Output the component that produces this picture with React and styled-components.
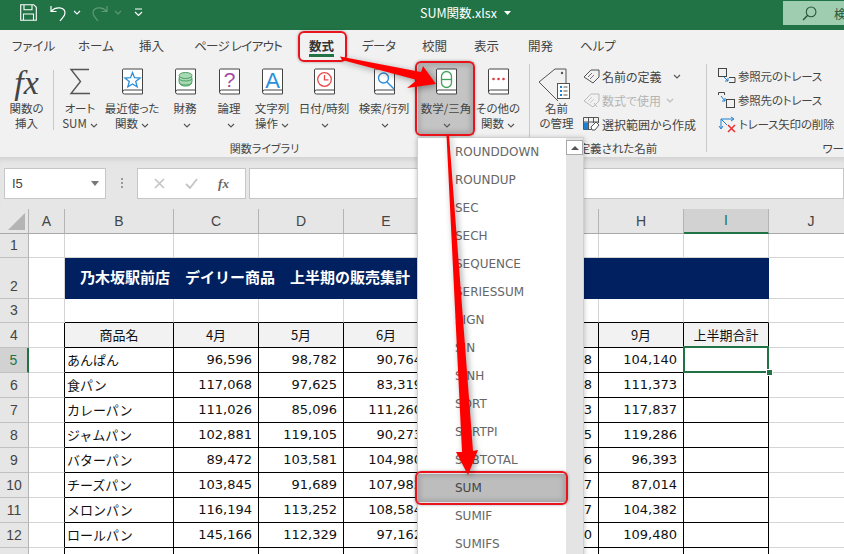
import React from "react";
import styled, { createGlobalStyle } from "styled-components";

const GREEN = "#217346";
const RED = "#e8131b";
const JP = `"Noto Sans CJK JP", "Noto Sans", sans-serif`;
const NUM = `"DejaVu Sans", sans-serif`;
const HEAD = `"Liberation Sans", sans-serif`;

const Global = createGlobalStyle`
  html, body { margin: 0; padding: 0; background: #fff; }
  * { box-sizing: border-box; }
`;

const Window = styled.div`
  position: relative;
  width: 844px;
  height: 554px;
  overflow: hidden;
  font-family: ${JP};
  color: #444;
`;

/* title bar */
const TitleBar = styled.div`
  display: flex;
  align-items: flex-start;
  height: 30px;
  background: ${GREEN};
`;
const QuickAccess = styled.div`
  display: flex;
  align-items: center;
  width: 420px;
  height: 25px;
  padding-left: 20px;
`;
const Title = styled.div`
  flex: 1;
  display: flex;
  align-items: center;
  gap: 7px;
  height: 25px;
  color: #fff;
  font-size: 12.5px;
`;
const SearchBox = styled.div`
  flex: none;
  display: flex;
  align-items: center;
  width: 61px;
  height: 24px;
  margin-top: 1px;
  padding-left: 19px;
  gap: 17px;
  background: #9fcdb0;
  color: #24553a;
  font-size: 12px;
  white-space: nowrap;
  overflow: hidden;
  svg {
    flex: none;
  }
`;

/* tabs */
const TabBar = styled.div`
  display: flex;
  align-items: center;
  height: 32px;
  padding: 0 0 2px 12px;
  background: #f1f1f1;
  font-feature-settings: "palt";
`;
const Tab = styled.div`
  flex: none;
  width: ${(p) => p.$w}px;
  font-size: 12.5px;
  letter-spacing: ${(p) => p.$tight || 0}px;
  color: ${(p) => (p.$active ? "#333" : "#444")};
  font-weight: ${(p) => (p.$active ? 700 : 400)};
  white-space: nowrap;
`;
const TabText = styled.span`
  position: relative;
  display: inline-block;
  ${(p) =>
    p.$active &&
    `&::after {
      content: "";
      position: absolute;
      left: 0;
      right: 0;
      bottom: -2px;
      height: 3px;
      background: ${GREEN};
    }`}
`;

/* ribbon */
const Ribbon = styled.div`
  display: flex;
  height: 95px;
  background: #f1f1f1;
  overflow: hidden;
  font-feature-settings: "palt";
`;
const Group = styled.div`
  display: flex;
  flex-direction: column;
  flex: none;
  width: ${(p) => p.$w}px;
  height: 88px;
  margin-top: 2px;
  border-right: ${(p) => (p.$open ? "none" : "1px solid #c8c8c8")};
`;
const GroupBody = styled.div`
  display: flex;
  flex: 1;
  align-items: flex-start;
`;
const GroupLabel = styled.div`
  height: 10px;
  text-align: ${(p) => p.$align || "center"};
  font-size: ${(p) => p.$size || 11.5}px;
  line-height: 12px;
  white-space: nowrap;
  color: #444;
`;
const BigButton = styled.div`
  display: flex;
  flex-direction: column;
  align-items: center;
  flex: none;
  width: ${(p) => p.$w}px;
  ${(p) =>
    p.$on
      ? `height: 73px; margin-top: -2px; padding-top: 6px; background: #c4c4c4;`
      : `padding-top: 4px;`}
`;
const IconSlot = styled.div`
  display: flex;
  justify-content: center;
  height: 33px;
`;
const FxMark = styled.span`
  font-family: "Liberation Serif", serif;
  font-style: italic;
  font-size: 34px;
  line-height: 30px;
  color: #444;
`;
const Label = styled.div`
  font-size: 11.5px;
  line-height: 15px;
  text-align: center;
  white-space: nowrap;
`;
const InnerSep = styled.div`
  flex: none;
  width: 1px;
  height: 60px;
  margin-top: 6px;
  background: #c8c8c8;
`;
const SmallList = styled.div`
  display: flex;
  flex-direction: column;
  padding-left: ${(p) => p.$indent || 0}px;
`;
const SmallRow = styled.div`
  display: flex;
  align-items: center;
  gap: 2px;
  height: 24px;
  font-size: ${(p) => p.$size || 12}px;
  letter-spacing: ${(p) => p.$tight || 0}px;
  white-space: nowrap;
  color: ${(p) => (p.$off ? "#b4b4b4" : "#444")};
`;

/* formula bar */
const FormulaBar = styled.div`
  display: flex;
  align-items: flex-start;
  height: 52px;
  padding: 11px 0 0 4px;
  background: #e6e6e6;
  box-shadow: inset 0 6px 5px -3px #d2d2d2;
`;
const NameBox = styled.div`
  display: flex;
  align-items: center;
  justify-content: space-between;
  width: 102px;
  height: 31px;
  padding: 0 6px 0 7px;
  background: #fff;
  border: 1px solid #c6c6c6;
  font-family: ${HEAD};
  font-size: 13px;
  color: #444;
`;
const Grip = styled.div`
  width: 2px;
  height: 11px;
  margin: 10px 14px 0 15px;
  background: repeating-linear-gradient(#9a9a9a 0 2px, transparent 2px 4px);
`;
const FxBox = styled.div`
  display: flex;
  align-items: center;
  justify-content: space-around;
  width: 109px;
  height: 31px;
  padding: 0 6px;
  background: #fff;
  border: 1px solid #c6c6c6;
`;
const FxSmall = styled.span`
  font-family: "Liberation Serif", serif;
  font-style: italic;
  font-weight: 700;
  font-size: 13px;
  color: #666;
`;
const FormulaInput = styled.div`
  flex: 1;
  height: 31px;
  margin-left: 3px;
  background: #fff;
  border: 1px solid #c6c6c6;
`;

/* sheet */
const Sheet = styled.div`
  display: grid;
  grid-template-columns: 29px 36px 109px repeat(8, 85px);
  grid-template-rows: 25px 24px 41px 24px 25px repeat(9, 25px);
  height: 345px;
  background: #fff;
`;
const Corner = styled.div`
  background: #e6e6e6;
  border-right: 1px solid #b4b4b4;
  border-bottom: 1px solid #a8a8a8;
  display: flex;
  align-items: flex-end;
  justify-content: flex-end;
  padding: 0 3px 3px 0;
  &::before {
    content: "";
    width: 17px;
    height: 17px;
    background: #b4b4b4;
    clip-path: polygon(100% 0, 100% 100%, 0 100%);
  }
`;
const ColHead = styled.div`
  display: flex;
  align-items: center;
  justify-content: center;
  padding-bottom: 1px;
  background: ${(p) => (p.$on ? "#d2d2d2" : "#e6e6e6")};
  border-right: 1px solid #b4b4b4;
  border-bottom: ${(p) => (p.$on ? `2px solid ${GREEN}` : "1px solid #a8a8a8")};
  font-family: ${HEAD};
  font-size: 14px;
  color: ${(p) => (p.$on ? GREEN : "#444")};
`;
const RowHead = styled.div`
  display: flex;
  align-items: flex-end;
  justify-content: center;
  padding-bottom: 4px;
  background: ${(p) => (p.$on ? "#d2d2d2" : "#e6e6e6")};
  border-right: ${(p) => (p.$on ? `2px solid ${GREEN}` : "1px solid #b4b4b4")};
  border-bottom: 1px solid #c0c0c0;
  font-family: ${HEAD};
  font-size: 14px;
  line-height: 16px;
  color: ${(p) => (p.$on ? GREEN : "#444")};
`;
const Cell = styled.div`
  position: relative;
  z-index: ${(p) => (p.$active ? 1 : 0)};
  display: flex;
  align-items: center;
  justify-content: ${(p) => p.$align || "flex-start"};
  min-width: 0;
  padding: 0 ${(p) => (p.$align === "flex-end" ? 6 : 2)}px 1px 2px;
  background: ${(p) => p.$bg || "#fff"};
  border-right: 1px solid ${(p) => p.$right || "#d4d4d4"};
  border-bottom: 1px solid ${(p) => p.$bottom || "#d4d4d4"};
  font-family: ${(p) => (p.$num ? NUM : JP)};
  font-size: 13px;
  color: #111;
  white-space: nowrap;
  overflow: ${(p) => (p.$active ? "visible" : "hidden")};
  ${(p) =>
    p.$active &&
    `&::before {
      content: "";
      position: absolute;
      inset: -2px -1px -1px -1px;
      border: 2px solid ${GREEN};
    }
    &::after {
      content: "";
      position: absolute;
      right: -4px;
      bottom: -3px;
      width: 5px;
      height: 5px;
      background: ${GREEN};
      box-shadow: 0 0 0 1px #fff;
    }`}
`;
const Band = styled.div`
  grid-column: span 8;
  display: flex;
  align-items: center;
  padding: 0 0 4px 15px;
  background: #002060;
  color: #fff;
  font-size: 15px;
  font-weight: 700;
  white-space: pre;
`;

/* dropdown */
const Dropdown = styled.div`
  position: absolute;
  left: 417px;
  top: 137px;
  display: flex;
  width: 167px;
  height: 430px;
  background: #fff;
  border: 1px solid #d0d0d0;
  box-shadow: 0 1px 5px rgba(0, 0, 0, 0.25);
`;
const FnList = styled.div`
  flex: 1;
  display: flex;
  flex-direction: column;
`;
const FnItem = styled.div`
  display: flex;
  align-items: center;
  flex: none;
  height: 28px;
  padding-left: 37px;
  font-family: ${NUM};
  font-size: 12px;
  color: ${(p) => (p.$on ? "#444" : "#666")};
  background: ${(p) => (p.$on ? "#bdbdbd" : "transparent")};
`;
const ScrollTrack = styled.div`
  flex: none;
  width: 17px;
  padding-top: 2px;
  background: #e4e4e4;
`;
const ScrollUp = styled.div`
  display: flex;
  align-items: center;
  justify-content: center;
  height: 15px;
  background: #fff;
  border: 1px solid #a8a8a8;
  &::before {
    content: "";
    border-left: 4px solid transparent;
    border-right: 4px solid transparent;
    border-bottom: 4px solid #555;
  }
`;

/* annotations drawn by the author of the screenshot */
const Callout = styled.div`
  position: absolute;
  left: ${(p) => p.$x}px;
  top: ${(p) => p.$y}px;
  width: ${(p) => p.$w}px;
  height: ${(p) => p.$h}px;
  border: 2px solid ${RED};
  border-radius: 6px;
  box-shadow: 0 0 3px rgba(0, 0, 0, 0.35)${(p) => (p.$inset ? ", inset 0 0 5px 3px rgba(0,0,0,0.14)" : "")};
`;
const ArrowLayer = styled.svg`
  position: absolute;
  left: 0;
  top: 0;
  filter: drop-shadow(2px 2px 3px rgba(0, 0, 0, 0.35));
`;

const Chev = ({ color = "#555" }) => (
  <svg width="8" height="5" viewBox="0 0 8 5" style={{ marginLeft: 3 }}>
    <path d="M1 1l3 3 3-3" fill="none" stroke={color} strokeWidth="1.1" />
  </svg>
);

const Book = ({ children }) => (
  <svg width="23" height="28" viewBox="0 0 23 28">
    <path d="M1.5 24V2a1 1 0 0 1 1-1h19v25H3.5a2 2 0 0 1-2-2a2 2 0 0 1 2-2h18" fill="#fff" stroke="#444" strokeWidth="1" />
    {children}
  </svg>
);

const bookArt = {
  star: <path d="M11.5 4.5l2 5.2 5.6.3-4.4 3.5 1.5 5.4-4.7-3-4.7 3 1.5-5.4L3.9 10l5.6-.3z" fill="none" stroke="#2b8fdc" strokeWidth="1.3" />,
  data: (
    <g fill="#a8d8b4" stroke="#4ca264" strokeWidth="1">
      <rect x="5" y="6" width="13" height="12" rx="5" />
      <ellipse cx="11.5" cy="7.5" rx="6.5" ry="3" />
      <path d="M5 11c2 2.6 11 2.6 13 0M5 15c2 2.6 11 2.6 13 0" fill="none" />
    </g>
  ),
  question: (
    <text x="11.5" y="19" textAnchor="middle" fontFamily="Liberation Sans" fontSize="21" fill="#a349a4">?</text>
  ),
  letter: (
    <text x="11.5" y="20" textAnchor="middle" fontFamily="Liberation Sans" fontSize="22" fill="#2b8fdc">A</text>
  ),
  clock: (
    <g fill="none" stroke="#e8494b" strokeWidth="1.3">
      <circle cx="11.5" cy="11.5" r="6.8" />
      <path d="M11.5 7v4.8h4" />
    </g>
  ),
  lens: (
    <g fill="none" stroke="#2b8fdc" strokeWidth="1.4">
      <circle cx="10.5" cy="10" r="5" />
      <path d="M14 14l7 7" />
    </g>
  ),
  theta: (
    <g fill="none" stroke="#3fa35b" strokeWidth="1.3">
      <rect x="6.5" y="3.5" width="10" height="16" rx="5" />
      <path d="M6.5 11.5h10" />
    </g>
  ),
  dots: (
    <g fill="#e03a3c">
      <circle cx="6.5" cy="11" r="1.3" />
      <circle cx="11.5" cy="11" r="1.3" />
      <circle cx="16.5" cy="11" r="1.3" />
    </g>
  ),
};

const SumIcon = () => (
  <svg width="22" height="28" viewBox="0 0 22 28">
    <path d="M20 1.5H2l9.5 12L2 25.5h19" fill="none" stroke="#555" strokeWidth="1.4" />
  </svg>
);

const NameTagIcon = () => (
  <svg width="37" height="34" viewBox="0 0 37 34">
    <path d="M1 14L17 1h11v14M20 33L1 14" fill="none" stroke="#555" strokeWidth="1" />
    <circle cx="24" cy="5" r="1.2" fill="#555" />
    <rect x="19.5" y="15.5" width="12" height="15" fill="#fff" stroke="#555" />
    <path d="M22 19h2M22 23h2M22 27h2" stroke="#1d7fd0" strokeWidth="2" />
    <path d="M25.5 19h4M25.5 23h4M25.5 27h4" stroke="#555" />
  </svg>
);

const SmallTag = ({ off }) => (
  <svg width="17" height="15" viewBox="0 0 17 15">
    <path d="M1 8l7-7h8v7l-6 6z" fill="none" stroke={off ? "#bbb" : "#555"} />
    <path d="M5 8l4-4M7 10l4-4" stroke={off ? "#ccc" : "#777"} />
    {off && <path d="M11 10l3 4" stroke="#bbb" />}
  </svg>
);

const SelectionIcon = () => (
  <svg width="17" height="15" viewBox="0 0 17 15">
    <path d="M.5.5h15M.5 5h15M.5.5v12h8M5.5.5v12M10.5.5V6M15.5.5V6" fill="none" stroke="#555" />
    <rect x="1" y="5.5" width="4" height="7" fill="#1d7fd0" />
    <path d="M8 10l5-5 3 3-4 5H9z" fill="#fff" stroke="#555" />
  </svg>
);

const TraceIcon = ({ dependents }) => (
  <svg width="18" height="17" viewBox="0 0 18 17">
    <rect x={dependents ? 8.5 : 0.5} y={dependents ? 7.5 : 0.5} width="8" height="8" fill="none" stroke="#444" />
    <path d={dependents ? "M.5 3V.5h6V3" : "M11 9.5h6v5h-6"} fill="none" stroke="#444" />
    <path d={dependents ? "M3 4l4 5M7 6v3H4" : "M6 9l4 4M10 10v3H7"} fill="none" stroke="#1d7fd0" />
  </svg>
);

const ClearTraceIcon = () => (
  <svg width="19" height="17" viewBox="0 0 19 17">
    <path d="M3 3h12M3 3v9M1 10l2 3 2-3M13 1l3 2-3 2" fill="none" stroke="#1d7fd0" />
    <path d="M3 3l6 6" stroke="#1d7fd0" />
    <path d="M10 9l7 7M17 9l-7 7" stroke="#e3342f" strokeWidth="1.5" />
  </svg>
);

const Save = () => (
  <svg width="17" height="17" viewBox="0 0 17 17">
    <path d="M.7.7h13l2.6 2.6v13H.7zM4 .7v5h8v-5M3.5 16.3V10h10v6.3" fill="none" stroke="#fff" strokeWidth="1.1" />
  </svg>
);
const Undo = ({ dim }) => (
  <svg width="17" height="18" viewBox="0 0 17 18" style={{ transform: dim ? "scaleX(-1)" : "none" }}>
    <path d="M1 2v5.5h5.5M1.5 7C6 2 15 3 15 9c0 3-3 5-5 8" fill="none" stroke={dim ? "#5f9a79" : "#fff"} strokeWidth="1.2" />
  </svg>
);
const Gap = styled.span`
  display: inline-flex;
  align-items: center;
  margin-left: ${(p) => p.$m}px;
`;

const Search = () => (
  <svg width="15" height="15" viewBox="0 0 14 14">
    <circle cx="8.5" cy="5.5" r="4.5" fill="none" stroke="#24553a" />
    <path d="M5.3 8.7L1 13" stroke="#24553a" strokeWidth="1.3" />
  </svg>
);

const tabs = [
  ["ファイル", 66], ["ホーム", 61], ["挿入", 55], ["ページ レイアウト", 115, -0.7], ["数式", 53, 0, true],
  ["データ", 60, -0.5], ["校閲", 52], ["表示", 54], ["開発", 52], ["ヘルプ", 40],
];

const books = [
  { w: 52, icon: <SumIcon />, l1: "オート", l2: "SUM" },
  { w: 52, icon: <Book>{bookArt.star}</Book>, l1: "最近使った", l2: "関数" },
  { w: 54, icon: <Book>{bookArt.data}</Book>, l1: "財務", l2: "" },
  { w: 34, icon: <Book>{bookArt.question}</Book>, l1: "論理", l2: "" },
  { w: 52, icon: <Book>{bookArt.letter}</Book>, l1: "文字列", l2: "操作" },
  { w: 52, icon: <Book>{bookArt.clock}</Book>, l1: "日付/時刻", l2: "" },
  { w: 68, icon: <Book>{bookArt.lens}</Book>, l1: "検索/行列", l2: "" },
  { w: 56, icon: <Book>{bookArt.theta}</Book>, l1: "数学/三角", l2: "", on: true },
  { w: 48, icon: <Book>{bookArt.dots}</Book>, l1: "その他の", l2: "関数" },
];

const functions = [
  "ROUNDDOWN", "ROUNDUP", "SEC", "SECH", "SEQUENCE", "SERIESSUM", "SIGN", "SIN",
  "SINH", "SQRT", "SQRTPI", "SUBTOTAL", "SUM", "SUMIF", "SUMIFS",
];

const columns = ["A", "B", "C", "D", "E", "F", "G", "H", "I", "J"];
const months = ["4月", "5月", "6月", "7月", "8月", "9月"];

const sales = [
  ["あんぱん", "96,596", "98,782", "90,764", "101,220", "99,418", "104,140"],
  ["食パン", "117,068", "97,625", "83,319", "95,310", "108,228", "111,373"],
  ["カレーパン", "111,026", "85,096", "111,260", "102,745", "93,183", "117,837"],
  ["ジャムパン", "102,881", "119,105", "90,273", "88,610", "110,935", "119,286"],
  ["バターパン", "89,472", "103,581", "104,980", "97,402", "92,546", "96,393"],
  ["チーズパン", "103,845", "91,689", "107,982", "106,118", "95,427", "87,014"],
  ["メロンパン", "116,194", "113,252", "108,584", "99,871", "101,367", "104,382"],
  ["ロールパン", "145,166", "112,329", "97,162", "93,504", "112,690", "109,480"],
  ["クリームパン", "", "", "", "", "", ""],
];

const BLACK = "#000";

const Bars = () => (
  <ArrowLayer width="844" height="554" viewBox="0 0 844 554">
    <polygon fill="#ff0000" points="340,56.5 421,72 423,66 436,84 407,88 417,80 342,60" />
    <polygon fill="#ff0000" points="446.5,135 449,135 473,451 478,450 468,475 456,452 462,452" />
  </ArrowLayer>
);

export default function App() {
  return (
    <Window>
      <Global />
      <TitleBar>
        <QuickAccess>
          <Save />
          <Gap $m={13}><Undo /></Gap>
          <Gap $m={3}><Chev color="#fff" /></Gap>
          <Gap $m={10}><Undo dim /></Gap>
          <Gap $m={3}><Chev color="#5f9a79" /></Gap>
          <Gap $m={12}>
            <svg width="9" height="9" viewBox="0 0 9 9">
              <path d="M1 1h7M1 4l3.5 3.5L8 4" fill="none" stroke="#fff" strokeWidth="1.2" />
            </svg>
          </Gap>
        </QuickAccess>
        <Title>
          SUM関数.xlsx
          <svg width="7" height="4" viewBox="0 0 7 4"><path d="M0 0h7L3.5 4z" fill="#fff" /></svg>
        </Title>
        <SearchBox><Search />検索</SearchBox>
      </TitleBar>

      <TabBar>
        {tabs.map(([name, w, tight, active]) => (
          <Tab key={name} $w={w} $tight={tight} $active={active}>
            <TabText $active={active}>{name}</TabText>
          </Tab>
        ))}
      </TabBar>

      <Ribbon>
        <Group $w={530}>
          <GroupBody>
            <BigButton $w={53}>
              <IconSlot><FxMark>fx</FxMark></IconSlot>
              <Label>関数の<br />挿入</Label>
            </BigButton>
            <InnerSep />
            {books.map((b) => (
              <BigButton key={b.l1} $w={b.w} $on={b.on}>
                <IconSlot>{b.icon}</IconSlot>
                <Label>
                  {b.l1}
                  <br />
                  {b.l2}
                  <Chev />
                </Label>
              </BigButton>
            ))}
          </GroupBody>
          <GroupLabel $size={11}>関数ライブラリ</GroupLabel>
        </Group>

        <Group $w={177}>
          <GroupBody>
            <BigButton $w={53}>
              <IconSlot><NameTagIcon /></IconSlot>
              <Label>名前<br />の管理</Label>
            </BigButton>
            <SmallList>
              <SmallRow><SmallTag />名前の定義<Gap $m={6}><Chev /></Gap></SmallRow>
              <SmallRow $off><SmallTag off />数式で使用<Chev color="#bbb" /></SmallRow>
              <SmallRow><SelectionIcon />選択範囲から作成</SmallRow>
            </SmallList>
          </GroupBody>
          <GroupLabel>定義された名前</GroupLabel>
        </Group>

        <Group $w={137} $open>
          <GroupBody>
            <SmallList $indent={11}>
              <SmallRow $size={11.5} $tight={-0.2}><TraceIcon />参照元のトレース</SmallRow>
              <SmallRow $size={11.5} $tight={-0.2}><TraceIcon dependents />参照先のトレース</SmallRow>
              <SmallRow $size={11.5} $tight={-0.2}><ClearTraceIcon />トレース矢印の削除<Gap $m={6}><Chev /></Gap></SmallRow>
            </SmallList>
          </GroupBody>
          <GroupLabel $align="right">ワー</GroupLabel>
        </Group>
      </Ribbon>

      <FormulaBar>
        <NameBox>
          I5
          <svg width="8" height="5" viewBox="0 0 8 5"><path d="M0 0h8L4 5z" fill="#777" /></svg>
        </NameBox>
        <Grip />
        <FxBox>
          <svg width="11" height="11" viewBox="0 0 11 11"><path d="M1 1l9 9M10 1l-9 9" stroke="#c4c4c4" strokeWidth="1.6" /></svg>
          <svg width="13" height="11" viewBox="0 0 13 11"><path d="M1 6l4 4 7-9" fill="none" stroke="#c4c4c4" strokeWidth="1.8" /></svg>
          <FxSmall>fx</FxSmall>
        </FxBox>
        <FormulaInput />
      </FormulaBar>

      <Sheet>
        <Corner />
        {columns.map((c) => (
          <ColHead key={c} $on={c === "I"}>{c}</ColHead>
        ))}

        <RowHead>1</RowHead>
        {columns.map((c) => <Cell key={c} />)}

        <RowHead>2</RowHead>
        <Cell />
        <Band>乃木坂駅前店　デイリー商品　上半期の販売集計</Band>
        <Cell />

        <RowHead>3</RowHead>
        {columns.map((c, i) => (
          <Cell key={c} $bottom={i >= 1 && i <= 8 ? BLACK : undefined} />
        ))}

        <RowHead>4</RowHead>
        <Cell $right={BLACK} />
        <Cell $align="center" $bg="#f2f2f2" $right={BLACK} $bottom={BLACK}>商品名</Cell>
        {months.map((m) => (
          <Cell key={m} $align="center" $bg="#f2f2f2" $right={BLACK} $bottom={BLACK}>{m}</Cell>
        ))}
        <Cell $align="center" $bg="#f2f2f2" $right={BLACK} $bottom={BLACK}>上半期合計</Cell>
        <Cell />

        {sales.map(([name, ...values], i) => (
          <React.Fragment key={name}>
            <RowHead $on={i === 0}>{i + 5}</RowHead>
            <Cell $right={BLACK} />
            <Cell $right={BLACK} $bottom={BLACK}>{name}</Cell>
            {values.map((v, j) => (
              <Cell key={j} $num $align="flex-end" $right={BLACK} $bottom={BLACK}>{v}</Cell>
            ))}
            <Cell $active={i === 0} $right={BLACK} $bottom={BLACK} />
            <Cell />
          </React.Fragment>
        ))}
      </Sheet>

      <Dropdown>
        <FnList>
          {functions.map((f) => (
            <FnItem key={f} $on={f === "SUM"}>{f}</FnItem>
          ))}
        </FnList>
        <ScrollTrack><ScrollUp /></ScrollTrack>
      </Dropdown>

      <Callout $x={298} $y={31} $w={49} $h={31} />
      <Callout $x={415} $y={61} $w={60} $h={75} $inset />
      <Callout $x={415} $y={471} $w={153} $h={34} $inset />
      <Bars />
    </Window>
  );
}
